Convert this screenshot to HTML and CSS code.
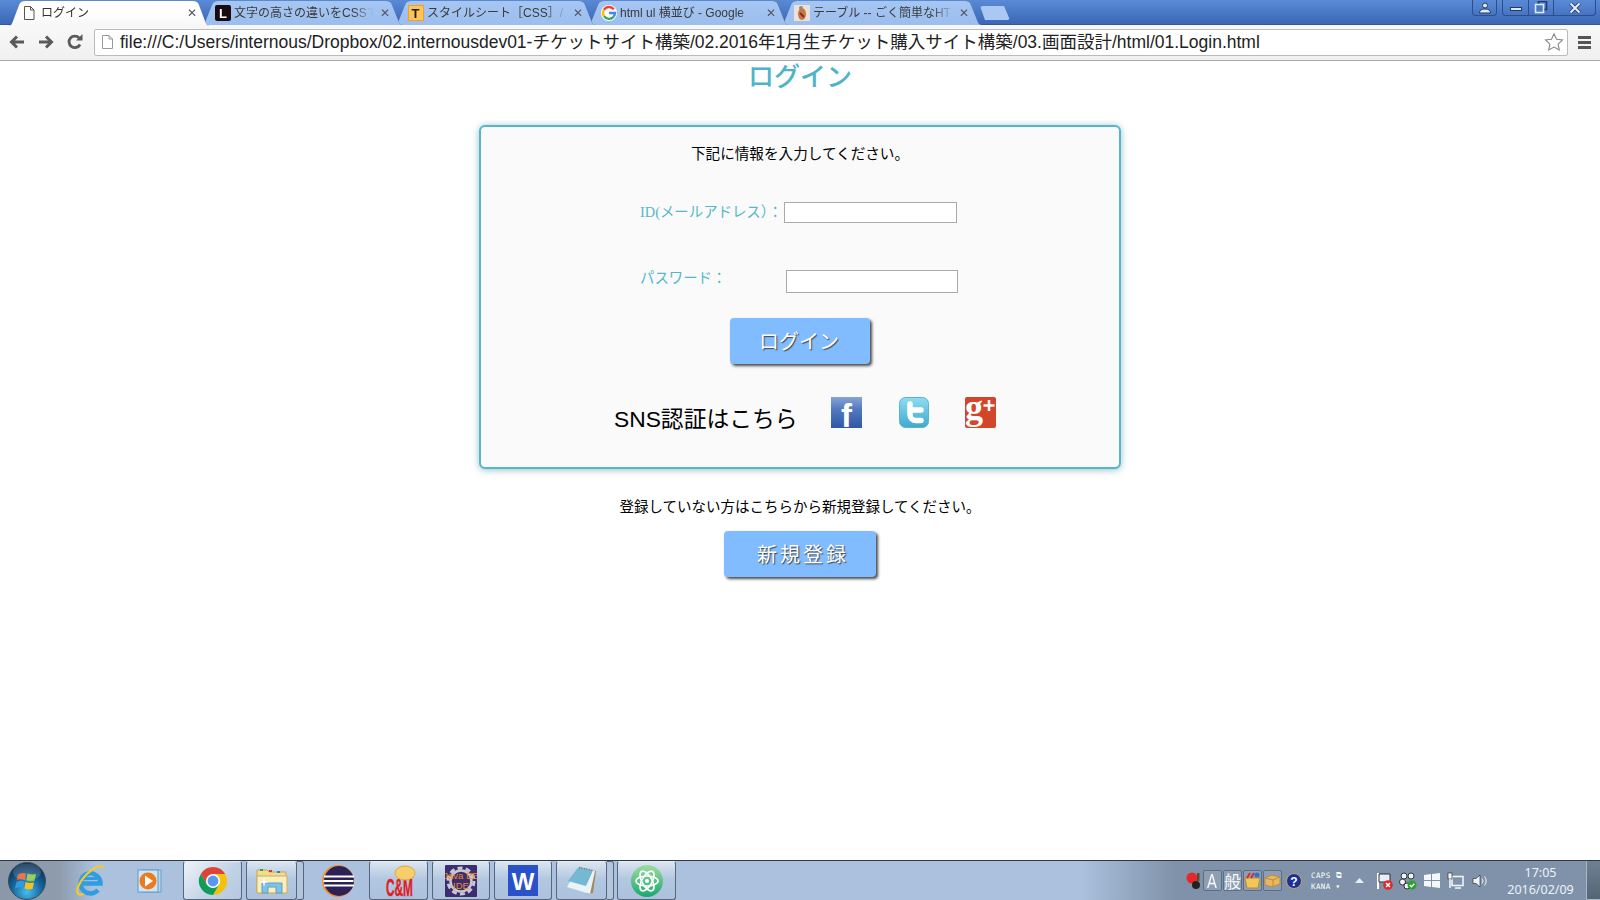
FILE: index.html
```html
<!DOCTYPE html>
<html lang="ja">
<head>
<meta charset="utf-8">
<title>ログイン</title>
<link rel="stylesheet" href="styles.css">
</head>
<body>
<header class="browser">
  <div class="tabstrip">
    <div class="tab tab-active"><div class="tab-shape">
      <svg class="fav" viewBox="0 0 16 16"><path d="M3.500 1.500h6l3.500 3.500v9.500h-9.500z" fill="#fff" stroke="#555"/><path d="M9.500 1.500v3.500h3.500" fill="none" stroke="#555"/></svg>
      <span class="tab-title">ログイン</span><span class="tab-x">✕</span>
    </div></div>
    <div class="tab"><div class="tab-shape">
      <svg class="fav" viewBox="0 0 16 16"><rect width="16" height="16" rx="2" fill="#1a0a10"/><text x="4" y="13" class="fav-letter" fill="#fff">L</text></svg>
      <span class="tab-title">文字の高さの違いをCSSで</span><span class="tab-x">✕</span>
    </div></div>
    <div class="tab"><div class="tab-shape">
      <svg class="fav" viewBox="0 0 16 16"><rect x=".5" y=".5" width="15" height="15" fill="#ffc35a" stroke="#f0a030"/><text x="3.500" y="13" class="fav-letter" fill="#222">T</text></svg>
      <span class="tab-title">スタイルシート［CSS］/</span><span class="tab-x">✕</span>
    </div></div>
    <div class="tab"><div class="tab-shape">
      <svg class="fav" viewBox="0 0 16 16"><circle cx="8" cy="8" r="8" fill="#fff"/><path d="M12.800 4.300A6 6 0 0 0 3 4.800" fill="none" stroke="#ea4335" stroke-width="2.400"/><path d="M3 4.800a6 6 0 0 0 0 6.400" fill="none" stroke="#fbbc05" stroke-width="2.400"/><path d="M3 11.200a6 6 0 0 0 9.600.500" fill="none" stroke="#34a853" stroke-width="2.400"/><path d="M12.600 11.700A6 6 0 0 0 14 8H8" fill="none" stroke="#4285f4" stroke-width="2.400"/></svg>
      <span class="tab-title">html ul 横並び - Google</span><span class="tab-x">✕</span>
    </div></div>
    <div class="tab"><div class="tab-shape">
      <svg class="fav" viewBox="0 0 16 16"><rect width="16" height="16" fill="#e8e2da"/><ellipse cx="8" cy="9" rx="4" ry="6" fill="#c8764a"/><circle cx="7" cy="3" r="2" fill="#a88468"/><path d="M6 8l4 4" stroke="#8a2a20" stroke-width="2"/></svg>
      <span class="tab-title">テーブル -- ごく簡単なHT</span><span class="tab-x">✕</span>
    </div></div>
    <div class="newtab"></div>
    <div class="profile-btn">
      <svg width="14" height="12" viewBox="0 0 14 12"><circle cx="7" cy="3.500" r="2.500" fill="#dce8fa" stroke="#233a66"/><path d="M1.500 11c0-3 2-4 5.500-4s5.500 1 5.500 4z" fill="#dce8fa" stroke="#233a66"/></svg>
    </div>
    <div class="win-btns">
      <div class="win-btn win-min"><svg width="14" height="8" viewBox="0 0 14 8"><rect x="1.500" y="3.500" width="11" height="3" fill="#dce8fa" stroke="#233a66"/></svg></div>
      <div class="win-btn win-max"><svg width="14" height="13" viewBox="0 0 14 13"><rect x="4.500" y=".5" width="8" height="8" fill="none" stroke="#233a66" stroke-width="1.600"/><rect x="1.500" y="3.500" width="8" height="8" fill="#4a78c4" stroke="#dce8fa" stroke-width="1.600"/></svg></div>
      <div class="win-btn win-close"><svg width="14" height="12" viewBox="0 0 14 12"><path d="M2.500 1.500l9 9m0-9l-9 9" stroke="#233a66" stroke-width="3.600"/><path d="M2.500 1.500l9 9m0-9l-9 9" stroke="#e4eefc" stroke-width="2"/></svg></div>
    </div>
  </div>
  <div class="toolbar">
    <svg class="nav" width="18" height="18" viewBox="0 0 18 18"><path d="M16 9H4M9 3.500L3.500 9 9 14.500" fill="none" stroke="#5a5a5a" stroke-width="3"/></svg>
    <svg class="nav" width="18" height="18" viewBox="0 0 18 18"><path d="M2 9h12M9 3.500L14.500 9 9 14.500" fill="none" stroke="#5a5a5a" stroke-width="3"/></svg>
    <svg class="nav" width="18" height="18" viewBox="0 0 18 18"><path d="M14 11.500A5.800 5.800 0 1 1 13.200 5" fill="none" stroke="#5a5a5a" stroke-width="2.800"/><path d="M10 7.500h6.500V1z" fill="#5a5a5a"/></svg>
    <div class="omnibox">
      <svg class="omni-doc" width="13" height="16" viewBox="0 0 13 16"><path d="M1.500 1.500h6.500l3.500 3.500v9.500h-10z" fill="#fff" stroke="#999"/><path d="M8 1.500v3.500h3.500" fill="none" stroke="#999"/></svg>
      <span class="url">file:///C:/Users/internous/Dropbox/02.internousdev01-チケットサイト構築/02.2016年1月生チケット購入サイト構築/03.画面設計/html/01.Login.html</span>
      <svg class="star" width="20" height="20" viewBox="0 0 20 20"><path d="M10 1.800l2.500 5.500 6 .7-4.400 4.100 1.200 5.900L10 15.100l-5.300 2.900 1.200-5.900L1.500 8l6-.7z" fill="#fff" stroke="#888" stroke-width="1.100"/></svg>
    </div>
    <div class="menu"><span></span><span></span><span></span></div>
  </div>
</header>

<main class="page">
  <h1 class="title">ログイン</h1>
  <section class="card">
    <p class="lead">下記に情報を入力してください。</p>
    <div class="field field-id">
      <label class="label label-id">ID(メールアドレス）：</label>
      <input class="input input-id" type="text">
    </div>
    <div class="field field-pw">
      <label class="label label-pw">パスワード：</label>
      <input class="input input-pw" type="password">
    </div>
    <button class="btn btn-login">ログイン</button>
    <div class="sns">
      <span class="sns-text">SNS認証はこちら</span>
      <svg class="sns-icon sns-fb" width="31" height="31" viewBox="0 0 31 31"><defs><linearGradient id="fb" x1="0" y1="0" x2="0" y2="1"><stop offset="0" stop-color="#86a3da"/><stop offset=".4" stop-color="#5179bf"/><stop offset="1" stop-color="#2f58a6"/></linearGradient></defs><rect width="31" height="31" fill="url(#fb)"/><text x="10" y="30" class="fb-f">f</text></svg>
      <svg class="sns-icon sns-tw" width="30" height="31" viewBox="0 0 30 31"><defs><linearGradient id="tw" x1="0" y1="0" x2="0" y2="1"><stop offset="0" stop-color="#8fdcf2"/><stop offset="1" stop-color="#3ea9cf"/></linearGradient></defs><rect x=".5" y=".5" width="29" height="30" rx="6" fill="url(#tw)" stroke="#58b4d4"/><path d="M11 7v10.500a6 6 0 0 0 6 6h5M11 13h11" fill="none" stroke="#fff" stroke-width="5.500" stroke-linecap="round"/></svg>
      <svg class="sns-icon sns-gp" width="31" height="31" viewBox="0 0 31 31"><rect width="31" height="31" rx="2" fill="#d2452b"/><text x="0" y="22" class="gp-g">g</text><path d="M24 3v11M18.500 8.500h11" stroke="#fff" stroke-width="2.600"/></svg>
    </div>
  </section>
  <p class="register">登録していない方はこちらから新規登録してください。</p>
  <button class="btn btn-register">新規登録</button>
</main>

<footer class="taskbar">
  <div class="task-start">
    <svg width="38" height="38" viewBox="0 0 38 38"><defs><radialGradient id="orb" cx=".5" cy=".8" r=".75"><stop offset="0" stop-color="#48bcee"/><stop offset=".55" stop-color="#14649c"/><stop offset="1" stop-color="#0a2c4c"/></radialGradient></defs><circle cx="19" cy="19" r="18.500" fill="url(#orb)" stroke="#3a4c60"/><path d="M10 12.500q4-2.500 8-1l-1 6.500q-4-1.500-8.500 .5z" fill="#ee5a28"/><path d="M19.500 11.500q4 1.500 8.500 .5l-1.500 7q-4 1-8-.5z" fill="#8cc63e"/><path d="M8.500 20q4-2 8-.5l-1 6.500q-4-1.500-8.500 .5z" fill="#2f9bdc"/><path d="M17.500 20q4 1.500 8.500 .5l-1.500 6.500q-4 1-8-.5z" fill="#f6c024"/><ellipse cx="19" cy="10" rx="14" ry="8.500" fill="#fff" opacity=".16"/></svg>
  </div>
  <div class="task-pin">
    <svg width="32" height="32" viewBox="0 0 32 32"><path d="M7 18.500h19.500A10 10 0 1 0 24 25" fill="none" stroke="#2f9de0" stroke-width="4.500"/><path d="M9 13.500h14" stroke="#2f9de0" stroke-width="3"/><path d="M30 2C24 -1 10 8 4 22c-2 6 0 9 6 7" fill="none" stroke="#f5c92a" stroke-width="2.200"/></svg>
  </div>
  <div class="task-pin">
    <svg width="28" height="28" viewBox="0 0 28 28"><rect x="7" y="3" width="18" height="22" fill="#b6d4ec" stroke="#6fa0c8"/><rect x="2" y="3" width="20" height="22" fill="#cfe4f5" stroke="#5f9ac6"/><circle cx="12" cy="14" r="8.500" fill="#ee7a1c"/><path d="M9 8.500l8 5.500-8 5.500z" fill="#fff"/></svg>
  </div>
  <div class="task-btn btn-chrome">
    <svg width="30" height="30" viewBox="0 0 32 32"><path d="M3 8.500A15 15 0 0 1 29 8.500H16L9.500 19.750z" fill="#db4437"/><path d="M29 8.500A15 15 0 0 1 16 31l6.500-11.250L16 8.500z" fill="#f4c20d"/><path d="M16 31A15 15 0 0 1 3 8.500l6.500 11.250h13z" fill="#0f9d58"/><circle cx="16" cy="16" r="7.500" fill="#fff"/><circle cx="16" cy="16" r="5.800" fill="#5a95ee"/></svg>
  </div>
  <div class="task-btn btn-folder">
    <svg width="32" height="28" viewBox="0 0 32 28"><path d="M1 3h10l2 2h17v21H1z" fill="#f3dc8e" stroke="#c0a560"/><rect x="4" y="2" width="3" height="2" fill="#2eaa3c"/><rect x="13" y="3" width="3" height="2" fill="#d03a2c"/><rect x="21" y="4" width="3" height="2" fill="#2a80d0"/><path d="M1 9h30v17H1z" fill="#fbeeb8" stroke="#c8ae68"/><path d="M6 26V16h20v10h-6v-6h-8v6z" fill="#7ec2e8" stroke="#5aa0c8"/><path d="M8 10l1 4 4 1-4 1-1 4-1-4-4-1 4-1z" fill="#fff"/></svg>
  </div>
  <div class="task-edge"></div>
  <div class="task-pin task-eclipse">
    <svg width="32" height="32" viewBox="0 0 32 32"><circle cx="16" cy="16" r="16" fill="#f0902c"/><circle cx="17" cy="16" r="15" fill="#2c2255"/><path d="M2 11.500h30M1.500 16h30M2 20.500h30" stroke="#fff" stroke-width="2"/></svg>
  </div>
  <div class="task-btn btn-cm">
    <svg width="36" height="34" viewBox="0 0 36 34"><text x="5" y="32" class="cm-text" textLength="27" lengthAdjust="spacingAndGlyphs">C&amp;M</text><ellipse cx="24" cy="9" rx="10" ry="7" fill="#f7cf6a" stroke="#e0a840"/></svg>
  </div>
  <div class="task-btn btn-java">
    <svg width="32" height="32" viewBox="0 0 32 32"><rect width="32" height="32" rx="1" fill="#3c2d70"/><circle cx="16" cy="16" r="13" fill="none" stroke="#c8c8d0" stroke-width="3" stroke-dasharray="5 3.200"/><circle cx="16" cy="16" r="10.500" fill="#3c2d70" stroke="#c8c8d0" stroke-width="2.500"/><text x="16" y="14" class="java-text">Java EE</text><text x="16" y="23.500" class="java-text">IDE</text></svg>
  </div>
  <div class="task-btn btn-w">
    <svg width="30" height="31" viewBox="0 0 30 31"><rect width="30" height="31" fill="#2a52c8"/><text x="15" y="25" class="w-text">W</text></svg>
  </div>
  <div class="task-btn btn-note">
    <svg width="32" height="30" viewBox="0 0 32 30"><path d="M13 1l17 4-3 22-6 1z" fill="#a08a60"/><path d="M12 1.500L29 5 24 28 1 21z" fill="#e8f4f8"/><path d="M12 1.500L27 4.500 20 20 2 15z" fill="#74b8d4"/><path d="M13 1.500L27 4.500" stroke="#777" stroke-width="1.500" stroke-dasharray="1 1.500"/></svg>
  </div>
  <div class="task-edge"></div>
  <div class="task-btn btn-atom">
    <svg width="32" height="32" viewBox="0 0 32 32"><defs><linearGradient id="at" x1="0" y1="0" x2="0" y2="1"><stop offset="0" stop-color="#a0dca0"/><stop offset="1" stop-color="#18a870"/></linearGradient></defs><circle cx="16" cy="16" r="16" fill="url(#at)"/><g fill="none" stroke="#fff" stroke-width="1.600"><ellipse cx="16" cy="16" rx="11" ry="5" transform="rotate(60 16 16)"/><ellipse cx="16" cy="16" rx="11" ry="5" transform="rotate(-60 16 16)"/><ellipse cx="16" cy="16" rx="11" ry="5"/></g><circle cx="16" cy="16" r="2" fill="#fff"/></svg>
  </div>

  <div class="tray">
    <svg class="tray-ball" width="17" height="18" viewBox="0 0 17 18"><circle cx="7" cy="6" r="5.500" fill="#e82828"/><rect x="12" y="1" width="2.500" height="8" fill="#5a4a30"/><circle cx="11" cy="13" r="4" fill="#222"/></svg>
    <div class="ime"><span class="ime-a">A</span></div>
    <div class="ime"><span class="ime-k">般</span></div>
    <div class="ime"><svg width="17" height="17" viewBox="0 0 17 17"><path d="M1 6h15l-2 10H3z" fill="#f0c85a" stroke="#b88a30"/><path d="M3 6l3-5M7 6l3-5" stroke="#d03030" stroke-width="2"/><circle cx="13" cy="3" r="2.500" fill="#3070d0"/></svg></div>
    <div class="ime"><svg width="17" height="15" viewBox="0 0 17 15"><path d="M1 5l7-3 8 2v7l-8 3-7-2z" fill="#e8b860" stroke="#b88a40"/><path d="M1 5l8 2 7-3M9 7v7" stroke="#b88a40" fill="none"/></svg></div>
    <svg class="tray-help" width="16" height="16" viewBox="0 0 16 16"><circle cx="8" cy="8" r="7.500" fill="#1a30a0" stroke="#c8a850"/><text x="8" y="12.500" class="help-text">?</text></svg>
    <div class="capskana"><span>CAPS ⧉</span><span>KANA ▾</span></div>
    <svg class="tray-up" width="9" height="5" viewBox="0 0 9 5"><path d="M0 5l4.500-5L9 5z" fill="#e8eef5"/></svg>
    <svg class="tray-flag" width="18" height="18" viewBox="0 0 18 18"><path d="M2 1v16" stroke="#fff" stroke-width="2"/><path d="M3 2h11v8H3z" fill="#e8eef5" stroke="#333"/><circle cx="12" cy="13" r="4.800" fill="#e02828"/><path d="M10 11l4 4m0-4l-4 4" stroke="#fff" stroke-width="1.500"/></svg>
    <svg class="tray-net" width="18" height="18" viewBox="0 0 18 18"><g fill="#eef3f8" stroke="#333"><circle cx="5" cy="4" r="3"/><circle cx="12" cy="4" r="3"/><circle cx="3.500" cy="10" r="3"/><circle cx="8" cy="14" r="3"/></g><circle cx="13" cy="13" r="4.500" fill="#2ca02c"/><path d="M10.800 13l1.700 1.700 2.800-3" fill="none" stroke="#fff" stroke-width="1.400"/></svg>
    <svg class="tray-win" width="16" height="15" viewBox="0 0 16 15"><path d="M0 2l7-1v6H0zM8 1l8-1v7H8zM0 8h7v6l-7-1zM8 8h8v7l-8-1z" fill="#f4f7fa"/></svg>
    <svg class="tray-pc" width="17" height="17" viewBox="0 0 17 17"><rect x="5" y="4.500" width="11" height="9" fill="#7f92a9" stroke="#f4f7fa" stroke-width="1.500"/><rect x="1" y="1" width="4" height="6" fill="#f4f7fa" stroke="#333" stroke-width=".7"/><path d="M3 7v9M8 16h6" stroke="#f4f7fa" stroke-width="1.500"/></svg>
    <svg class="tray-vol" width="16" height="14" viewBox="0 0 16 14"><path d="M1 4.500h3L8 1v12L4 9.500H1z" fill="#eef3f8" stroke="#333" stroke-width=".7"/><path d="M10 4.500a4 4 0 0 1 0 5M12.500 2.500a7 7 0 0 1 0 9" fill="none" stroke="#eef3f8"/></svg>
    <div class="clock"><span>17:05</span><span>2016/02/09</span></div>
    <div class="show-desktop"></div>
  </div>
</footer>
</body>
</html>
```

FILE: styles.css
```css
* { box-sizing: border-box; }
html, body { height: 100%; }
body {
  margin: 0;
  height: 100vh;
  overflow: hidden;
  display: flex;
  flex-direction: column;
  background: #fff;
  font-family: "Noto Sans CJK JP", "Liberation Sans", sans-serif;
  font-size: 14px;
  color: #000;
}

/* browser chrome */
.browser { flex: none; }
.tabstrip {
  height: 25px;
  display: flex;
  padding: 1px 4px 0 7px;
  background: linear-gradient(#5a8ad6, #3b67b6);
  border-bottom: 1px solid #35588f;
}
.tab {
  width: 204px;
  height: 24px;
  margin-right: -11px;
  flex: none;
  filter: drop-shadow(0 0 .6px #3a5c94);
}
.tab:nth-child(1) { z-index: 5; }
.tab:nth-child(2) { z-index: 4; }
.tab:nth-child(3) { z-index: 3; }
.tab:nth-child(4) { z-index: 2; }
.tab:nth-child(5) { z-index: 1; }
.tab-shape {
  width: 204px;
  height: 24px;
  display: flex;
  align-items: center;
  padding: 0 12px 1px 15px;
  background: linear-gradient(#a6c6f2, #9cbeee);
  clip-path: path("M0 24c4 0 5-2 6-5L12 4c1-3 3-4 6-4H186c3 0 5 1 6 4L198 19c1 3 2 5 6 5Z");
}
.tab-active { height: 25px; }
.tab-active .tab-shape {
  height: 25px;
  padding-left: 14px;
  background: linear-gradient(#fff 50%, #f6f6f6);
  clip-path: path("M0 25c4 0 5-2 6-5L12 4c1-3 3-4 6-4H186c3 0 5 1 6 4L198 20c1 3 2 5 6 5Z");
}
.fav { width: 16px; height: 16px; flex: none; margin-right: 3px; }
.tab-active .fav { margin-right: 4px; }
.fav-letter { font: bold 13px "Liberation Sans", sans-serif; }
.tab-title {
  flex: 1;
  min-width: 0;
  font-family: "Liberation Sans", "Noto Sans CJK JP", sans-serif;
  font-size: 12px;
  line-height: 16px;
  color: #3a3a3a;
  white-space: nowrap;
  overflow: hidden;
  -webkit-mask-image: linear-gradient(to right, #000 85%, transparent);
  mask-image: linear-gradient(to right, #000 85%, transparent);
}
.tab-active .tab-title { color: #333; -webkit-mask-image: none; mask-image: none; }
.tab-x {
  flex: none;
  width: 14px;
  margin-left: 4px;
  font: bold 12px "DejaVu Sans", sans-serif;
  color: #556;
  text-align: center;
}
.newtab {
  width: 30px;
  height: 14px;
  flex: none;
  margin: 5px 0 0 8px;
  background: #a9c8f2;
  clip-path: polygon(0 0, 24px 0, 30px 100%, 5px 100%);
  border-radius: 3px;
}
.profile-btn {
  width: 25px;
  height: 16px;
  margin: -1px 5px 0 auto;
  display: flex;
  align-items: center;
  justify-content: center;
  border: 1px solid #2c4f8c;
  border-top: 0;
  border-radius: 0 0 4px 4px;
}
.win-btns {
  height: 16px;
  margin-top: -1px;
  display: flex;
  border: 1px solid #2c4f8c;
  border-top: 0;
  border-radius: 0 0 4px 4px;
}
.win-btn {
  display: flex;
  align-items: center;
  justify-content: center;
  border-right: 1px solid #2c4f8c;
}
.win-min { width: 26px; }
.win-max { width: 25px; }
.win-close { width: 41px; border-right: 0; }

.toolbar {
  height: 36px;
  display: flex;
  align-items: center;
  padding: 0 0 1px 8px;
  background: linear-gradient(#f8f8f8, #f0f0f0);
  border-bottom: 1px solid #aaa;
}
.nav { flex: none; margin-right: 11px; }
.omnibox {
  width: 1474px;
  height: 27px;
  margin-left: -1px;
  display: flex;
  align-items: center;
  padding: 0 3px 0 6px;
  background: #fff;
  border: 1px solid #bbb;
  border-radius: 2px;
  flex: none;
}
.omni-doc { flex: none; margin-right: 6px; }
.url {
  flex: 1;
  font-family: "Liberation Sans", "Noto Sans CJK JP", sans-serif;
  font-size: 17.500px;
  line-height: 22px;
  color: #222;
  white-space: nowrap;
}
.star { flex: none; }
.menu {
  flex: none;
  width: 13px;
  margin-left: 10px;
  display: flex;
  flex-direction: column;
  gap: 2px;
}
.menu span { height: 3px; background: #555; }

/* page */
.page {
  flex: 1;
  min-height: 0;
  display: flex;
  flex-direction: column;
  align-items: center;
}
.title {
  margin: -1px 0 0;
  font-size: 26px;
  line-height: 30px;
  font-weight: 500;
  color: #4fb4c6;
}
.card {
  width: 642px;
  height: 344px;
  margin-top: 35px;
  padding: 16px 0 0;
  flex: none;
  display: flex;
  flex-direction: column;
  background: #fafafa;
  border: 2px solid #55b7c8;
  border-radius: 6px;
  box-shadow: 0 1px 7px rgba(60, 140, 160, .55);
}
.lead {
  margin: 0;
  font-size: 14.600px;
  line-height: 20px;
  text-align: center;
  color: #000;
}
.field {
  display: flex;
  margin-left: 159px;
}
.field-id { margin-top: 39px; height: 21px; align-items: flex-start; }
.field-pw { margin-top: 47px; height: 23px; align-items: flex-start; }
.label {
  flex: none;
  font-family: "Liberation Serif", "Noto Sans CJK JP", serif;
  font-size: 14.400px;
  line-height: 16px;
  color: #55b7c8;
  white-space: nowrap;
}
.label-id { width: 144px; margin-top: 2px; }
.label-pw { width: 146px; }
.input {
  display: block;
  margin: 0;
  padding: 0 2px;
  background: #fff;
  border: 1px solid #aaa;
  border-radius: 0;
  outline: none;
}
.input-id { width: 173px; height: 21px; }
.input-pw { width: 172px; height: 23px; }
.btn {
  display: block;
  height: 46px;
  margin: 0;
  padding: 0 0 2px;
  border: 0;
  border-radius: 4px;
  background: #80bcff;
  color: #fff;
  font-family: "Noto Sans CJK JP", sans-serif;
  font-size: 20px;
  text-shadow: 1px 1px 1px #444;
  box-shadow: 2px 2px 3px #4a4a4a;
}
.btn-login {
  width: 140px;
  margin: 25px auto 0;
  padding-right: 2px;
}
.btn-register {
  width: 152px;
  margin-top: 15px;
  padding-left: 6px;
  flex: none;
  letter-spacing: 3px;
}
.sns {
  display: flex;
  align-items: flex-start;
  margin: 33px 0 0 133px;
}
.sns-text {
  flex: none;
  width: 182px;
  margin-top: 7px;
  font-size: 22.800px;
  line-height: 30px;
  white-space: nowrap;
  font-family: "Liberation Sans", "Noto Sans CJK JP", sans-serif;
}
.sns-icon { flex: none; display: block; overflow: visible; }
.sns-fb { margin-left: 35px; }
.sns-tw { margin-left: 37px; }
.sns-gp { margin-left: 36px; }
.fb-f { font: bold 33px "Liberation Sans", sans-serif; fill: #fff; }
.gp-g { font: bold 36px "Liberation Serif", serif; fill: #fff; }
.register {
  margin: 27px 0 0;
  font-size: 14.500px;
  line-height: 20px;
  color: #000;
}

/* taskbar */
.taskbar {
  flex: none;
  height: 40px;
  display: flex;
  align-items: stretch;
  background: linear-gradient(to right, #8b98a8 0, #8e9cae 60px, #abc1dd 95px, #abc1dd 1080px, #7f92a9 1175px);
  border-top: 1px solid #2c3a48;
}
.task-start {
  width: 54px;
  flex: none;
  display: flex;
  align-items: center;
  justify-content: center;
}
.task-pin {
  width: 60px;
  flex: none;
  display: flex;
  align-items: center;
  justify-content: center;
}
.task-start + .task-pin { margin-left: 6px; }
.task-btn {
  flex: none;
  width: 58px;
  margin-left: 4px;
  display: flex;
  align-items: center;
  justify-content: center;
  background: linear-gradient(#dbe5f1, #b3c8e0 45%, #abc1dd);
  border: 1px solid #56667c;
  border-top-color: #e4ecf5;
  border-radius: 3px;
}
.btn-chrome { width: 59px; margin-left: 3px; background: linear-gradient(135deg, #eef2f8, #c2d2e6 60%, #b4c8e0); }
.btn-folder { width: 51px; }
.btn-cm { width: 59px; margin-left: 1px; }
.btn-note { width: 51px; }
.btn-atom { margin-left: 3px; width: 59px; }
.task-edge {
  flex: none;
  width: 7px;
  background: #b3c6de;
  border: 1px solid #56667c;
  border-left: 0;
  border-radius: 0 3px 3px 0;
}
.task-eclipse { margin-left: 4px; }
.cm-text {
  font: bold 24px "Liberation Sans", sans-serif;
  fill: #e01c24;
  stroke: #e01c24;
  stroke-width: .4px;
}
.java-text { font: 9.500px "Liberation Sans", sans-serif; fill: #f08a1c; text-anchor: middle; }
.w-text { font: bold 24px "Liberation Sans", sans-serif; fill: #fff; text-anchor: middle; }

.tray {
  flex: none;
  margin-left: auto;
  display: flex;
  align-items: center;
  color: #eef3f8;
}
.tray-ball { flex: none; margin-right: 1px; }
.ime {
  width: 19px;
  height: 21px;
  margin-right: 1px;
  flex: none;
  display: flex;
  align-items: center;
  justify-content: center;
  border: 1px solid #5c6e84;
  border-radius: 2px;
  background: rgba(255, 255, 255, .12);
  color: #f6f8fb;
  font-size: 17px;
  line-height: 19px;
  overflow: hidden;
}
.ime-a { font-family: "Liberation Sans", sans-serif; font-size: 21px; transform: scaleX(.7); }
.tray-help { flex: none; margin-left: 3px; }
.help-text { font: bold 12px "Liberation Sans", sans-serif; fill: #fff; text-anchor: middle; }
.capskana {
  flex: none;
  width: 44px;
  margin-left: 9px;
  display: flex;
  flex-direction: column;
  gap: 2px;
  font: 7.500px/9px "DejaVu Sans Mono", monospace;
  letter-spacing: .4px;
  color: #fff;
  white-space: nowrap;
}
.tray-up { flex: none; margin-right: 12px; }
.tray-flag { flex: none; margin-right: 5px; }
.tray-net { flex: none; margin-right: 7px; }
.tray-win { flex: none; margin-right: 7px; }
.tray-pc { flex: none; margin-right: 8px; }
.tray-vol { flex: none; }
.clock {
  flex: none;
  width: 98px;
  padding-left: 7px;
  display: flex;
  flex-direction: column;
  align-items: center;
  font: 12.500px/17px "Noto Sans", sans-serif;
  color: #eef3f8;
}
.show-desktop {
  flex: none;
  width: 14px;
  align-self: stretch;
  background: linear-gradient(#6f8094, #556576);
  border: 1px solid #a8b8c8;
  border-right: 0;
  border-top: 0;
}
```
